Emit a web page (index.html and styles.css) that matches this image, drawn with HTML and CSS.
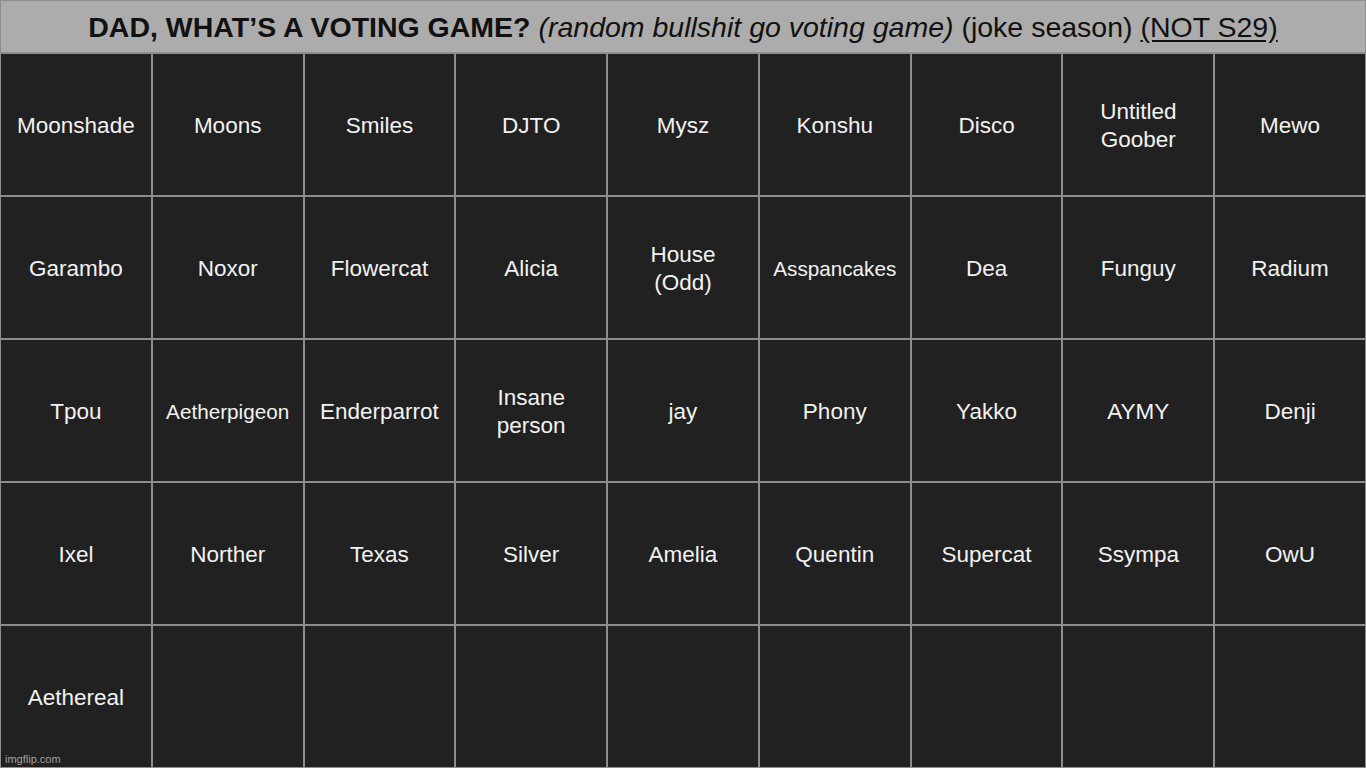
FILE: index.html
```html
<!DOCTYPE html>
<html>
<head>
<meta charset="utf-8">
<link rel="stylesheet" href="styles.css">
</head>
<body>
<div class="board">
  <div class="title"><span class="title-text"><b>DAD, WHAT’S A VOTING GAME?</b> <i>(random bullshit go voting game)</i> (joke season) <u>(NOT S29)</u></span></div>
  <div class="cell">Moonshade</div>
  <div class="cell">Moons</div>
  <div class="cell">Smiles</div>
  <div class="cell">DJTO</div>
  <div class="cell">Mysz</div>
  <div class="cell">Konshu</div>
  <div class="cell">Disco</div>
  <div class="cell">Untitled<br>Goober</div>
  <div class="cell">Mewo</div>
  <div class="cell">Garambo</div>
  <div class="cell">Noxor</div>
  <div class="cell">Flowercat</div>
  <div class="cell">Alicia</div>
  <div class="cell">House<br>(Odd)</div>
  <div class="cell small">Asspancakes</div>
  <div class="cell">Dea</div>
  <div class="cell">Funguy</div>
  <div class="cell">Radium</div>
  <div class="cell">Tpou</div>
  <div class="cell small">Aetherpigeon</div>
  <div class="cell">Enderparrot</div>
  <div class="cell">Insane<br>person</div>
  <div class="cell">jay</div>
  <div class="cell">Phony</div>
  <div class="cell">Yakko</div>
  <div class="cell">AYMY</div>
  <div class="cell">Denji</div>
  <div class="cell">Ixel</div>
  <div class="cell">Norther</div>
  <div class="cell">Texas</div>
  <div class="cell">Silver</div>
  <div class="cell">Amelia</div>
  <div class="cell">Quentin</div>
  <div class="cell">Supercat</div>
  <div class="cell">Ssympa</div>
  <div class="cell">OwU</div>
  <div class="cell">Aethereal</div>
  <div class="cell"></div>
  <div class="cell"></div>
  <div class="cell"></div>
  <div class="cell"></div>
  <div class="cell"></div>
  <div class="cell"></div>
  <div class="cell"></div>
  <div class="cell"></div>
  <div class="watermark">imgflip.com</div>
</div>
</body>
</html>
```
FILE: styles.css
```css
html, body {
  margin: 0;
  padding: 0;
  background: #212121;
}
.board {
  position: relative;
  width: 1366px;
  height: 768px;
  box-sizing: border-box;
  padding: 1px;
  background: #8e8e8e;
  display: grid;
  grid-template-columns: repeat(9, 1fr);
  grid-template-rows: 51px repeat(5, 1fr);
  gap: 2px;
  font-family: "Liberation Sans", Arial, sans-serif;
}
.title {
  grid-column: 1 / -1;
  background: #acacac;
  color: #111;
  font-size: 28.5px;
  display: flex;
  align-items: center;
  justify-content: center;
  padding-top: 2px;
  box-sizing: border-box;
}
.title-text {
  white-space: pre;
}
.title u {
  text-underline-offset: 3px;
}
.cell {
  background: #212121;
  color: #f2f2f2;
  font-size: 22.5px;
  line-height: 28px;
  display: flex;
  align-items: center;
  justify-content: center;
  text-align: center;
  padding-top: 3px;
  box-sizing: border-box;
}
.cell.small {
  font-size: 20.7px;
}
.watermark {
  position: absolute;
  left: 5px;
  bottom: 3px;
  font-size: 11px;
  color: #a0a0a0;
}
```
